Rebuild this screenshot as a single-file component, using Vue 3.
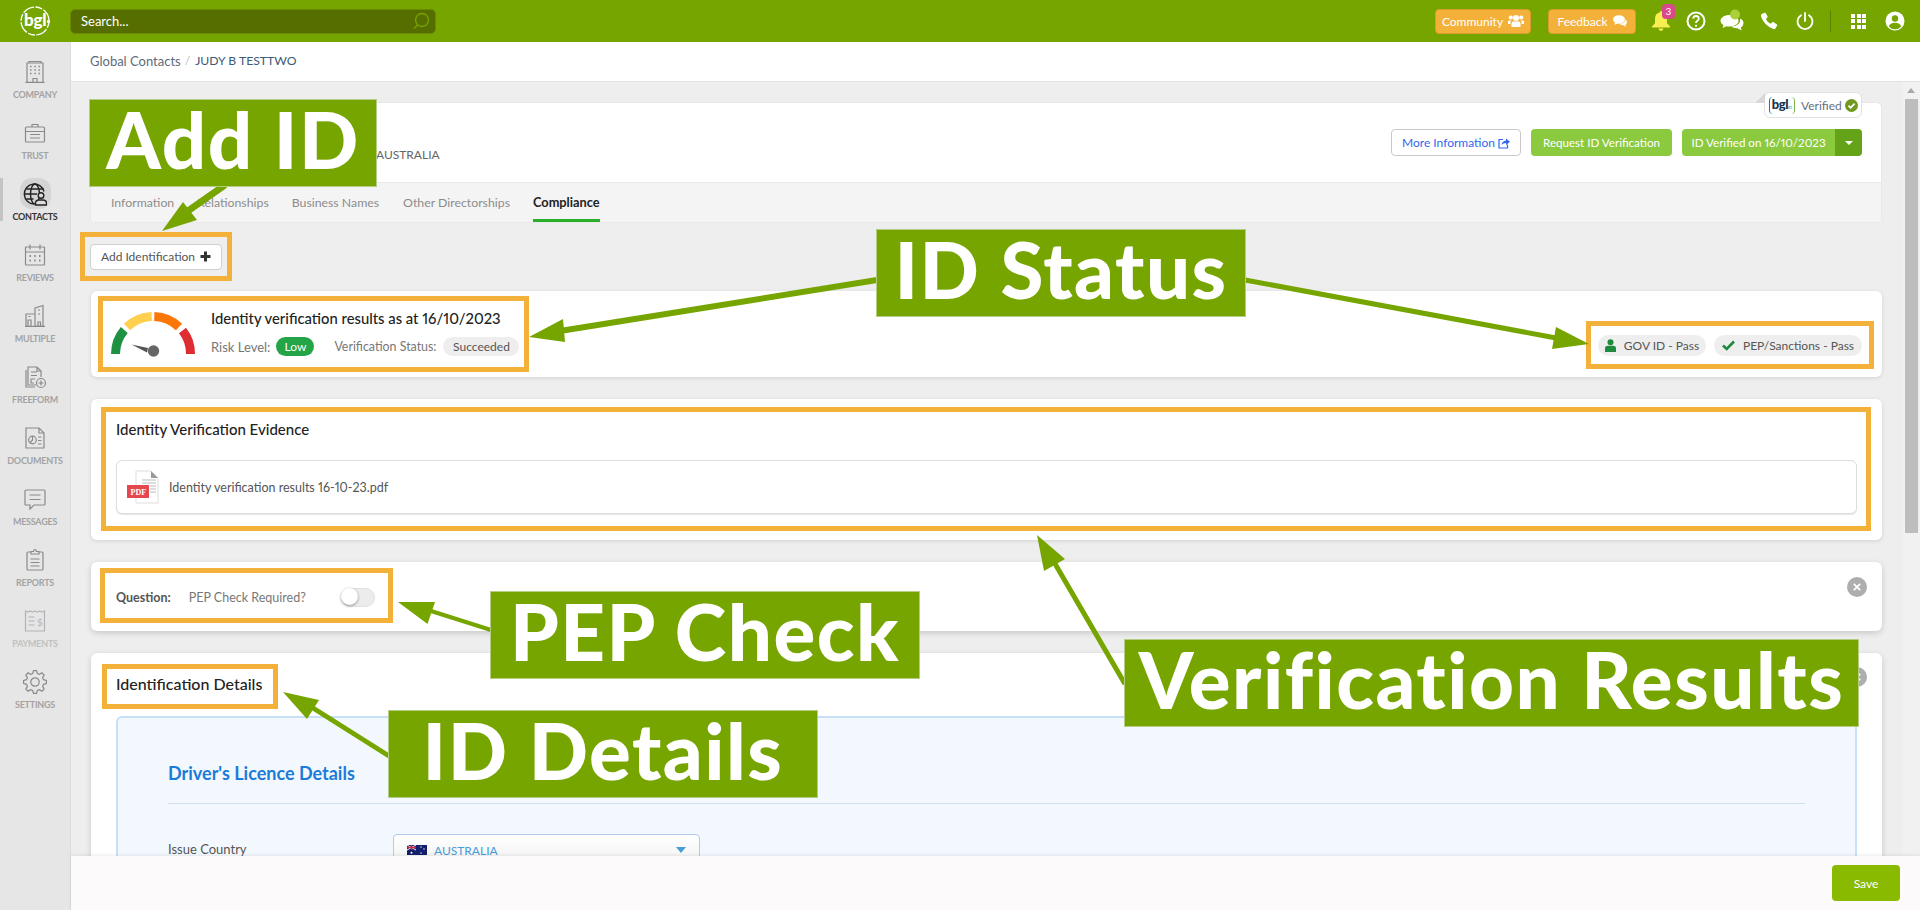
<script setup>
const gearPath = (() => {
  const teeth = 8, cx = 12, cy = 12, out = 11.5, inn = 8.8
  const pts = []
  for (let i = 0; i < teeth; i++) {
    const a = (i / teeth) * Math.PI * 2 - Math.PI / 2
    const s = (Math.PI * 2) / teeth
    for (const [o, r] of [[-0.34, inn], [-0.17, out], [0.17, out], [0.34, inn]]) {
      const t = a + o * s
      pts.push(`${(cx + r * Math.cos(t)).toFixed(2)} ${(cy + r * Math.sin(t)).toFixed(2)}`)
    }
  }
  return 'M' + pts.join('L') + 'Z'
})()
const nav = [
  { label: 'COMPANY', icon: 'company' },
  { label: 'TRUST', icon: 'trust' },
  { label: 'CONTACTS', icon: 'contacts', active: true },
  { label: 'REVIEWS', icon: 'reviews' },
  { label: 'MULTIPLE', icon: 'multiple' },
  { label: 'FREEFORM', icon: 'freeform' },
  { label: 'DOCUMENTS', icon: 'documents' },
  { label: 'MESSAGES', icon: 'messages' },
  { label: 'REPORTS', icon: 'reports' },
  { label: 'PAYMENTS', icon: 'payments', faint: true },
  { label: 'SETTINGS', icon: 'settings' }
]
const tabs = ['Information', 'Relationships', 'Business Names', 'Other Directorships', 'Compliance']
const outlines = ['o-add', 'o-status', 'o-chips', 'o-evidence', 'o-question', 'o-details']
const arrows = [
  { x1: 225, y1: 185, x2: 185, y2: 213, w: 7, head: '162,231 183,202 197,220' },
  { x1: 877, y1: 280, x2: 560, y2: 331, w: 6, head: '529,337 563,319 565,342' },
  { x1: 1245, y1: 280, x2: 1556, y2: 338, w: 5, head: '1589,344 1556,327 1552,349' },
  { x1: 1125, y1: 684, x2: 1054, y2: 562, w: 5, head: '1037,535 1065,559 1044,571' },
  { x1: 491, y1: 630, x2: 431, y2: 611, w: 4, head: '398,602 435,602 427.5,624' },
  { x1: 389, y1: 756, x2: 313, y2: 708, w: 5, head: '283,692 319,700 307,719' }
]
const labels = [
  { text: 'Add ID', cls: 'l-add' },
  { text: 'ID Status', cls: 'l-status' },
  { text: 'PEP Check', cls: 'l-pep' },
  { text: 'ID Details', cls: 'l-details' },
  { text: 'Verification Results', cls: 'l-results' }
]
</script>

<template>
  <div class="app">
    <header class="topbar">
      <div class="logo">
        <svg width="32" height="32" viewBox="0 0 32 32"><circle cx="16" cy="16" r="14" fill="none" stroke="#fff" stroke-width="1.3" stroke-dasharray="7 1.5 12 1.5"/><circle cx="29.500" cy="16.500" r="1.700" fill="#fff"/></svg>
        <span class="logo-text">bgl</span>
      </div>
      <div class="search">
        <span>Search...</span>
        <svg width="18" height="18" viewBox="0 0 18 18" fill="none" stroke="#76a500" stroke-width="1.3"><circle cx="10" cy="8" r="6.5"/><path d="M5.5 13 2 16.5"/></svg>
      </div>
      <div class="top-right">
        <button class="pill-btn community">Community
          <svg width="16" height="14" viewBox="0 0 16 14" fill="#fff"><circle cx="8" cy="4" r="3"/><circle cx="2.8" cy="3.5" r="2.1"/><circle cx="13.2" cy="3.5" r="2.1"/><path d="M3.5 13V9.5Q3.5 7.6 5.5 7.6h5q2 0 2 1.9V13zM0 10V7.8Q0 6.4 1.6 6.4h1.6Q2.4 7.4 2.4 9v1zM16 10V7.8q0-1.4-1.6-1.4h-1.6q.8 1 .8 2.6v1z"/></svg>
        </button>
        <button class="pill-btn feedback">Feedback
          <svg width="14" height="12" viewBox="0 0 14 12" fill="#fff"><ellipse cx="6" cy="4.5" rx="6" ry="4.2"/><path d="M2 7.5 1.6 10 5 8zM12.8 4.4q1.2 1 1.2 2.6 0 1.7-1.6 2.7l.4 2-2.6-1.5q-2.5 0-3.9-1.4 5.6-.3 6.5-4.4z"/></svg>
        </button>
        <div class="bell">
          <svg width="20" height="22" viewBox="0 0 20 22" fill="#f7ee52"><path d="M10 1q1.3 0 1.4 1.6Q16 3.6 16 9v4.2l3 3.3v1.1H1v-1.1l3-3.3V9q0-5.4 4.6-6.4Q8.700 1 10 1zM7.500 18.600h5Q12.200 21 10 21T7.500 18.600z"/></svg>
          <span class="badge">3</span>
        </div>
        <svg class="ti i-q" width="20" height="20" viewBox="0 0 20 20" fill="none" stroke="#fff" stroke-width="2"><circle cx="10" cy="10" r="8.500"/><path d="M7.200 7.600Q7.400 5 10 5t2.800 2.400q0 1.500-1.500 2.300-1.300.7-1.300 2.300" stroke-width="1.800"/><circle cx="10" cy="14.800" r="1.100" fill="#fff" stroke="none"/></svg>
        <svg class="ti i-chat" width="24" height="24" viewBox="0 0 24 24" fill="#fff"><path d="M9.500 6C4.300 6 .5 8.700.5 12q0 2.700 3 4.300L2.500 19l4-1.800q1.400.3 3 .3c5.200 0 9-2.500 9-5.700S14.700 6 9.500 6z"/><path d="M20.300 9.500q3.200 1.700 3.200 4.700 0 2.700-2.700 4.200l.9 3.100-4.200-2.200q-4 .2-6.500-1.800 9.700-.2 9.300-8z"/><circle cx="15" cy="5.500" r="5" fill="#a9cf3a"/></svg>
        <svg class="ti i-phone" width="18" height="18" viewBox="0 0 18 18" fill="#fff"><path d="M4.500 .8 1.400 2.300Q.6 2.800 1 4.500 3.800 13 13.200 17q1.600.4 2.200-.4l1.800-3.100q.300-.7-.3-1.100l-3.500-2.300q-.7-.4-1.200.2l-1.400 1.500Q7.300 10.500 5.900 7l1.500-1.600q.5-.6.100-1.200L5.600 1q-.4-.6-1.100-.2z"/></svg>
        <svg class="ti i-power" width="18" height="18" viewBox="0 0 18 18" fill="none" stroke="#fff" stroke-width="1.800" stroke-linecap="round"><path d="M5 3.200a7.500 7.500 0 1 0 8 0"/><path d="M9 1v8"/></svg>
        <span class="divider"></span>
        <div class="grid-icon"><i v-for="n in 9" :key="n"></i></div>
        <svg class="ti i-user" width="20" height="20" viewBox="0 0 20 20"><circle cx="10" cy="10" r="9.500" fill="#fff"/><circle cx="10" cy="7.500" r="3.200" fill="#76a500"/><path d="M3.800 15.500Q5 11.800 10 11.800t6.200 3.700Q14 18.200 10 18.200T3.800 15.500z" fill="#76a500"/></svg>
      </div>
    </header>

    <div class="body">
      <aside class="sidebar">
        <div v-for="item in nav" :key="item.label" class="nav-item" :class="{ active: item.active, faint: item.faint }">
          <div class="nav-icon">
            <svg width="24" height="24" viewBox="0 0 24 24" fill="none" stroke="currentColor" stroke-width="1.200">
              <template v-if="item.icon === 'company'">
                <path d="M4 22V3h16v19M2.500 22.300h19M6 3V1.500h12V3M10 22v-3.500h4V22"/>
                <path d="M7 6.500h1.500M11.300 6.500h1.500M15.500 6.500H17M7 10h1.500M11.300 10h1.500M15.500 10H17M7 13.500h1.500M11.300 13.500h1.500M15.500 13.500H17" stroke-width="1.600"/>
              </template>
              <template v-else-if="item.icon === 'trust'">
                <rect x="2.500" y="6" width="19" height="15" rx="1"/>
                <path d="M9 6V3.500h6V6M2.500 10.500h19M7 13.500h10M7 17h10"/>
              </template>
              <template v-else-if="item.icon === 'contacts'">
                <g stroke="#222" stroke-width="1.400">
                  <path d="M21 9.500A10 10 0 1 0 11 22"/>
                  <ellipse cx="12" cy="12" rx="4.500" ry="10"/>
                  <path d="M2 12h12M3.500 7h17M3.500 17h7"/>
                  <circle cx="18" cy="13.500" r="2.800" fill="#ddd"/>
                  <path d="M12.500 23v-1.500q0-3.500 3.500-3.500h4q3.500 0 3.500 3.500V23z" fill="#ddd"/>
                </g>
              </template>
              <template v-else-if="item.icon === 'reviews'">
                <rect x="2.500" y="4" width="19" height="18" rx=".5"/>
                <path d="M2.500 9h19M7 1.500v5M17 1.500v5"/>
                <path d="M6.500 13h1.500M11.200 13h1.500M16 13h1.500M6.500 17.500h1.500M11.200 17.500h1.500M16 17.500h1.500" stroke-width="1.800"/>
              </template>
              <template v-else-if="item.icon === 'multiple'">
                <path d="M12 22V4l8-2.500V22zM3 22V10h9v12M2 22.300h20"/>
                <path d="M5 22v-6h3v6M15 22v-4h2.500v4M5.500 12.500h2M15 6h2M15 10h2"/>
              </template>
              <template v-else-if="item.icon === 'freeform'">
                <path d="M13 20H5V2h9l4 4v6M14 2v4h4M8 7h6M8 10.500h6M8 14h4M8 14v4h3"/>
                <path d="M3 5v17h9"/>
                <circle cx="18" cy="18" r="4.500"/><path d="M18 15.500v5M15.500 18h5"/>
              </template>
              <template v-else-if="item.icon === 'documents'">
                <path d="M3 22V2h13l5 5v15zM16 2v5h5"/>
                <circle cx="9.500" cy="14" r="3.800"/><path d="M9.500 10.200V14l-2.500 3M15 11h3.500M15 14.500h3.500M15 18h3.500"/>
              </template>
              <template v-else-if="item.icon === 'messages'">
                <path d="M3 3h18q1 0 1 1v13q0 1-1 1H11l-4 4v-4H3q-1 0-1-1V4q0-1 1-1zM6.500 8h11M6.500 12.500h11"/>
              </template>
              <template v-else-if="item.icon === 'reports'">
                <path d="M8 4H5q-1 0-1 1v16q0 1 1 1h14q1 0 1-1V5q0-1-1-1h-3"/>
                <path d="M8 6V3.500h2.500Q11 1.500 12 1.500t1.500 2H16V6zM7.500 11h9M7.500 14.500h9M7.500 18h9"/>
              </template>
              <template v-else-if="item.icon === 'payments'">
                <path d="M2.500 2v20h19V2l-2.400 1.200L16.800 2l-2.400 1.200L12 2 9.600 3.200 7.200 2 4.900 3.200zM5.500 8h6M5.500 12h6M5.500 16h6"/>
                <text x="14" y="17" font-size="10" fill="currentColor" stroke="none" font-family="Lato, sans-serif">$</text>
              </template>
              <template v-else>
                <path :d="gearPath"/>
                <circle cx="12" cy="12" r="4.200"/>
              </template>
            </svg>
          </div>
          <span class="nav-label">{{ item.label }}</span>
        </div>
      </aside>

      <main class="main">
        <nav class="crumbs"><span>Global Contacts</span><em>/</em><strong>JUDY B TESTTWO</strong></nav>
        <div class="main-row">
          <div class="content">
            <section class="head-card">
              <div class="badge-verified">
                <span class="fold"></span>
                <span class="id-logo"><b>bgl</b><small>ID</small></span>
                <span class="verified-text">Verified</span>
                <svg width="13" height="13" viewBox="0 0 13 13"><circle cx="6.500" cy="6.500" r="6.500" fill="#6f9a1f"/><path d="M3.500 6.700 5.600 8.800 9.600 4.600" fill="none" stroke="#fff" stroke-width="1.800"/></svg>
              </div>
              <div class="head-top">
                <span class="country">AUSTRALIA</span>
                <div class="head-actions">
                  <button class="btn-more">More Information
                    <svg width="12" height="12" viewBox="0 0 12 12" fill="none" stroke="#3366ee" stroke-width="1.200"><path d="M5 2.500H1v8.500h8.500V7.500"/><path d="M3.500 8Q4 4 8 3.800V1.500L12 4.800 8 8V6Q5 6 3.500 8z" fill="#3366ee" stroke="none"/></svg>
                  </button>
                  <button class="btn-green">Request ID Verification</button>
                  <div class="split">
                    <button class="btn-green flat">ID Verified on 16/10/2023</button>
                    <span class="caret-box"><i></i></span>
                  </div>
                </div>
              </div>
              <div class="tabs">
                <span v-for="t in tabs" :key="t" class="tab" :class="{ current: t === 'Compliance' }">{{ t }}</span>
              </div>
            </section>

            <button class="btn-add">Add Identification
              <svg width="11" height="11" viewBox="0 0 11 11" fill="#333"><path d="M4 .5h3V4h3.500v3H7v3.500H4V7H.5V4H4z"/></svg>
            </button>

            <section class="card risk">
              <svg class="gauge" width="86" height="50" viewBox="0 0 86 50" fill="none">
                <g stroke-width="9">
                  <path d="M5.500 44A37.500 37.500 0 0 1 14.300 20" stroke="#1f9142"/>
                  <path d="M17 17A37.500 37.500 0 0 1 41.700 6.500" stroke="#ffcf4f"/>
                  <path d="M44.300 6.500A37.500 37.500 0 0 1 69 17" stroke="#fb7608"/>
                  <path d="M72.500 20.500A37.500 37.500 0 0 1 80.500 44" stroke="#de2c33"/>
                </g>
                <path d="M21.500 34.500 38 38 37 42.500z" fill="#555"/>
                <circle cx="43.500" cy="41" r="5.700" fill="#666"/>
              </svg>
              <div class="risk-text">
                <h3>Identity verification results as at 16/10/2023</h3>
                <div class="risk-row">
                  <span>Risk Level:</span><b class="pill low">Low</b>
                  <span class="vs">Verification Status:</span><b class="pill grey">Succeeded</b>
                </div>
              </div>
              <div class="chips">
                <span class="chip">
                  <svg width="11" height="13" viewBox="0 0 11 13" fill="#1d8a3e"><circle cx="5.500" cy="3.200" r="3"/><path d="M0 13V9.500Q0 6.800 3 6.800h5q3 0 3 2.700V13z"/></svg>
                  GOV ID - Pass
                </span>
                <span class="chip">
                  <svg width="13" height="11" viewBox="0 0 13 11" fill="none" stroke="#1d8a3e" stroke-width="2.600"><path d="M1 5.500 4.700 9 12 1.500"/></svg>
                  PEP/Sanctions - Pass
                </span>
              </div>
            </section>

            <section class="card evidence">
              <h3>Identity Verification Evidence</h3>
              <div class="file">
                <svg class="pdf" width="33" height="34" viewBox="0 0 33 34">
                  <path d="M9 1h15l7 7v25H9z" fill="#fff" stroke="#ddd"/><path d="M24 1v7h7z" fill="#999"/>
                  <path d="M15 10h14M15 13h14M23 16h6M23 19h6M23 22h6" stroke="#bbb" stroke-width="1"/>
                  <rect x="0" y="15" width="22" height="13" fill="#e5474f"/>
                  <text x="3.500" y="25" font-size="8" font-weight="700" fill="#fff" font-family="Liberation Serif, serif">PDF</text>
                </svg>
                <span>Identity verification results 16-10-23.pdf</span>
              </div>
            </section>

            <section class="card question">
              <b>Question:</b>
              <span class="q-text">PEP Check Required?</span>
              <span class="toggle"><i></i></span>
              <span class="close"><svg width="8" height="8" viewBox="0 0 8 8" stroke="#fff" stroke-width="1.800"><path d="M.8.8l6.400 6.400M7.200.8.8 7.200"/></svg></span>
            </section>

            <section class="card details">
              <h3>Identification Details</h3>
              <span class="close"><svg width="8" height="8" viewBox="0 0 8 8" stroke="#fff" stroke-width="1.800"><path d="M.8.8l6.400 6.400M7.200.8.8 7.200"/></svg></span>
              <div class="panel">
                <h4>Driver's Licence Details</h4>
                <div class="rule"></div>
                <div class="field">
                  <label>Issue Country</label>
                  <div class="select">
                    <svg width="20" height="10" viewBox="0 0 20 10"><rect width="20" height="10" fill="#14206e"/><path d="M0 0l9 5M9 0 0 5" stroke="#fff" stroke-width="1"/><path d="M4.500 0v5M0 2.500h9" stroke="#d8273a" stroke-width="1.400"/><circle cx="4.500" cy="7.800" r="1" fill="#fff"/><circle cx="14" cy="2" r=".7" fill="#fff"/><circle cx="17" cy="4" r=".7" fill="#fff"/><circle cx="14" cy="8" r=".7" fill="#fff"/></svg>
                    <span>AUSTRALIA</span>
                    <i class="sel-caret"></i>
                  </div>
                </div>
              </div>
            </section>
          </div>
          <div class="scrollbar"><i class="up"></i><span class="thumb"></span></div>
        </div>
        <footer class="foot"><button class="btn-save">Save</button></footer>
      </main>
    </div>

    <div class="overlay">
      <span v-for="o in outlines" :key="o" class="outline" :class="o"></span>
      <svg class="arrows" width="1920" height="910" viewBox="0 0 1920 910">
        <g v-for="(a, i) in arrows" :key="i">
          <line :x1="a.x1" :y1="a.y1" :x2="a.x2" :y2="a.y2" :stroke-width="a.w" stroke="#76a500"/>
          <polygon :points="a.head" fill="#76a500"/>
        </g>
      </svg>
      <div v-for="l in labels" :key="l.text" class="callout" :class="l.cls">{{ l.text }}</div>
    </div>
  </div>
</template>

<style>
html, body { margin: 0; overflow: hidden; }
</style>

<style scoped>
.app { position: relative; width: 1920px; height: 910px; overflow: hidden; font-family: Lato, "Liberation Sans", sans-serif; font-variant-numeric: proportional-nums; font-size: 13px; color: #555; background: #eee; }
button { font-family: inherit; font-variant-numeric: inherit; cursor: pointer; }
h3, h4 { margin: 0; }

.topbar { height: 42px; background: #76a500; display: flex; align-items: center; }
.logo { width: 70px; height: 42px; display: flex; align-items: center; justify-content: center; position: relative; }
.logo-text { position: absolute; left: 24px; top: 9px; color: #fff; font-size: 17px; font-weight: 900; letter-spacing: -.3px; }
.search { width: 366px; height: 25px; box-sizing: border-box; background: #566e00; border: 1px solid #6a8a05; border-radius: 5px; display: flex; align-items: center; justify-content: space-between; padding: 0 5px 0 10px; color: #fff; font-size: 13px; }
.top-right { margin-left: auto; display: flex; align-items: center; padding-right: 15px; }
.pill-btn { height: 25px; box-sizing: border-box; background: #f4b13a; border: 1px solid #d99c2e; border-radius: 4px; color: #fff; font-size: 12px; display: flex; align-items: center; justify-content: center; gap: 5px; padding: 0; white-space: nowrap; }
.pill-btn svg { flex: none; }
.community { width: 96px; margin-right: 17px; }
.feedback { width: 88px; margin-right: 15px; }
.bell { position: relative; width: 20px; height: 22px; margin-right: 15px; }
.badge { position: absolute; left: 11px; top: -6px; width: 13px; height: 15px; border-radius: 4px; background: #d8488b; color: #fff; font-size: 10px; line-height: 15px; text-align: center; }
.ti { display: block; }
.i-q { margin-right: 14px; }
.i-chat { margin-right: 16px; margin-top: -1px; }
.i-phone { margin-right: 18px; }
.i-power { margin-right: 16px; }
.divider { width: 1px; height: 22px; background: #5c8000; margin-right: 20px; }
.grid-icon { width: 15px; height: 15px; display: grid; grid-template-columns: repeat(3, 4px); grid-auto-rows: 4px; gap: 1.500px; margin-right: 19px; }
.grid-icon i { background: #fff; }

.body { display: flex; height: 868px; }
.sidebar { width: 70px; flex: none; background: #e6e6e6; border-right: 1px solid #dcdcdc; padding-top: 14px; display: flex; flex-direction: column; }
.nav-item { height: 61px; display: flex; flex-direction: column; align-items: center; color: #8a8a8a; position: relative; flex: none; }
.nav-icon { width: 31px; height: 31px; display: flex; align-items: center; justify-content: center; border-radius: 12px; }
.nav-label { font-size: 9px; font-weight: 700; letter-spacing: -.25px; color: #a3a3a3; margin-top: 2px; line-height: 12px; }
.active .nav-icon { background: #d4d4d4; }
.active .nav-label { color: #333; }
.active::before { content: ""; position: absolute; left: 0; top: 0; width: 3px; height: 43px; background: #c4c4c4; }
.faint { opacity: .55; }

.main { flex: 1; min-width: 0; display: flex; flex-direction: column; }
.crumbs { height: 40px; box-sizing: border-box; background: #fff; border-bottom: 1px solid #e2e2e2; display: flex; align-items: center; padding: 0 0 2px 19px; font-size: 13px; color: #5d6b78; flex: none; }
.crumbs em { font-style: normal; color: #bbb; margin: 0 5px 0 4px; font-size: 12px; }
.crumbs strong { font-weight: 400; font-size: 12.2px; color: #3c5a78; }
.main-row { flex: 1; min-height: 0; display: flex; overflow: hidden; }
.content { flex: 1; min-width: 0; padding: 20px 21px 0 19px; display: flex; flex-direction: column; align-items: stretch; }
.scrollbar { width: 17px; flex: none; background: #f1f1f1; position: relative; }
.up { position: absolute; left: 4px; top: 6px; border: 4px solid transparent; border-bottom: 5px solid #a8a8a8; border-top: 0; }
.thumb { position: absolute; left: 2px; right: 2px; top: 17px; height: 434px; background: #bdbdbd; }

.head-card { height: 121px; flex: none; box-sizing: border-box; background: #fff; border: 1px solid #e8e8e8; border-radius: 5px; position: relative; display: flex; flex-direction: column; }
.badge-verified { position: absolute; right: 19px; top: -11px; height: 26px; width: 98px; box-sizing: border-box; background: #fff; border: 1px solid #e2e2e2; border-radius: 6px; display: flex; align-items: center; padding-left: 4px; gap: 6px; }
.fold { position: absolute; left: -10px; top: 0; border-left: 10px solid transparent; border-bottom: 10px solid #d8d8d8; }
.id-logo { width: 26px; height: 17px; flex: none; box-sizing: border-box; border-left: 1.500px solid #1c7c9c; border-right: 1.500px solid #7ab648; border-radius: 4px; font-size: 13px; color: #12344d; line-height: 14px; text-align: center; white-space: nowrap; }
.id-logo b { font-weight: 900; letter-spacing: -.5px; }
.id-logo small { font-size: 4px; color: #1c7c9c; }
.verified-text { font-size: 12px; color: #66707a; width: 38px; }
.head-top { height: 79px; box-sizing: border-box; display: flex; align-items: flex-start; padding: 26px 19px 0 0; flex: none; }
.country { margin: 18px 0 0 285px; color: #666; font-size: 12px; }
.head-actions { margin-left: auto; display: flex; gap: 10px; }
.btn-more { width: 130px; height: 27px; box-sizing: border-box; background: #fff; border: 1px solid #c9c9c9; border-radius: 4px; color: #3366ee; font-size: 12px; display: flex; align-items: center; justify-content: center; gap: 3px; padding: 0; }
.btn-green { height: 27px; width: 141px; background: #8bc93f; border: 0; border-radius: 4px; color: #fff; font-size: 11.600px; padding: 0; }
.split { display: flex; }
.btn-green.flat { width: 153px; border-radius: 4px 0 0 4px; }
.caret-box { width: 27px; height: 27px; background: #64a317; border-radius: 0 4px 4px 0; display: flex; align-items: center; justify-content: center; }
.caret-box i { border: 4px solid transparent; border-top: 4px solid #fff; border-bottom: 0; }
.tabs { flex: 1; background: #f4f4f4; border-top: 1px solid #e8e8e8; border-radius: 0 0 5px 5px; display: flex; padding-left: 20px; gap: 23px; }
.tab { height: 100%; display: flex; align-items: center; color: #8c8c8c; font-size: 12.300px; box-sizing: border-box; padding-bottom: 1px; }
.tab:nth-child(4) { margin-left: 1px; }
.tab.current { color: #222; font-weight: 700; font-size: 12.800px; border-bottom: 3px solid #2aaf2a; padding: 2px 0 0; }

.btn-add { align-self: flex-start; margin-top: 21px; height: 26px; width: 132px; box-sizing: border-box; background: #fff; border: 1px solid #cfcfcf; border-radius: 4px; color: #555; font-size: 12px; display: flex; align-items: center; justify-content: center; gap: 5px; padding: 0 0 2px; flex: none; }

.card { background: #fff; border-radius: 6px; box-shadow: 0 1px 4px rgba(0,0,0,.12); flex: none; position: relative; margin-left: 1px; }
.risk { margin-top: 21px; height: 86px; display: flex; align-items: flex-start; box-sizing: border-box; padding: 16px 20px 0 18px; }
.gauge { margin: 3px 0 0 1px; flex: none; }
.risk-text { margin-left: 15px; }
.risk-text h3 { font-size: 14.800px; font-weight: 500; color: #222; line-height: 22px; }
.risk-row { display: flex; align-items: center; margin-top: 8px; font-size: 13px; color: #777; }
.pill { height: 19px; border-radius: 10px; font-weight: 400; font-size: 12px; line-height: 19px; text-align: center; display: block; }
.low { width: 38px; background: #22a447; color: #fff; margin-left: 6px; }
.vs { margin-left: 20px; font-size: 12.400px; }
.grey { width: 76px; background: #eee; color: #555; margin-left: 7px; }
.chips { margin-left: auto; display: flex; gap: 8px; margin-top: 28px; }
.chip { height: 21px; background: #eee; border-radius: 11px; display: flex; align-items: center; justify-content: center; gap: 8px; font-size: 12px; color: #555; }
.chip:first-child { width: 108px; }
.chip:last-child { width: 148px; }

.evidence { margin-top: 22px; height: 141px; box-sizing: border-box; padding: 19px 25px 0 25px; }
.evidence h3 { font-size: 15px; font-weight: 500; color: #222; line-height: 22px; }
.file { margin-top: 20px; height: 54px; box-sizing: border-box; background: #fff; border: 1px solid #ddd; border-radius: 6px; box-shadow: 0 1px 1px rgba(0,0,0,.1); display: flex; align-items: center; padding-left: 10px; font-size: 12.500px; color: #555; }
.pdf { margin-right: 9px; }

.question { margin-top: 22px; height: 69px; display: flex; align-items: center; padding: 1px 0 0 25px; box-sizing: border-box; font-size: 12.500px; box-shadow: 0 2px 6px rgba(0,0,0,.16); }
.question b { color: #555; font-weight: 700; }
.q-text { margin-left: 18px; color: #777; }
.toggle { margin-left: 35px; width: 34px; height: 19px; background: #ececec; border-radius: 10px; border: 1px solid #e0e0e0; box-sizing: border-box; position: relative; }
.toggle i { position: absolute; left: -1px; top: -1px; width: 17px; height: 17px; background: #fff; border-radius: 50%; box-shadow: 0 1px 3px rgba(0,0,0,.4); }
.close { position: absolute; right: 15px; top: 15px; width: 20px; height: 20px; border-radius: 50%; background: #aeaeae; display: flex; align-items: center; justify-content: center; }

.details { margin-top: 22px; height: 400px; box-sizing: border-box; padding: 20px 25px 0; box-shadow: 0 2px 6px rgba(0,0,0,.16); }
.details .close { top: 14px; }
.details h3 { font-size: 16px; font-weight: 500; color: #222; line-height: 22px; }
.panel { margin-top: 21px; height: 300px; box-sizing: border-box; background: #f3f8fe; border: 2px solid #c7e0f8; border-radius: 6px; padding: 0 50px; }
.panel h4 { margin-top: 45px; font-size: 18px; font-weight: 700; color: #1a7bd9; line-height: 20px; }
.rule { height: 1px; background: #cfe2ee; margin-top: 20px; }
.field { display: flex; align-items: flex-start; margin-top: 30px; }
.field label { width: 225px; color: #555; font-size: 13px; line-height: 30px; }
.select { width: 307px; height: 32px; box-sizing: border-box; background: linear-gradient(#fff, #f1f1f1); border: 1px solid #b2c9f0; border-radius: 4px; display: flex; align-items: center; padding: 0 13px; gap: 7px; color: #4a9bd8; font-size: 12px; }
.sel-caret { margin-left: auto; border: 5px solid transparent; border-top: 6px solid #4a9bd8; border-bottom: 0; }

.foot { height: 54px; flex: none; background: #fcfafb; display: flex; align-items: center; justify-content: flex-end; padding-right: 20px; box-sizing: border-box; box-shadow: 0 -1px 3px rgba(0,0,0,.08); position: relative; }
.btn-save { width: 68px; height: 36px; background: #8aba00; border: 0; border-radius: 4px; color: #fff; font-size: 12px; }

.overlay { position: absolute; inset: 0; pointer-events: none; }
.outline { position: absolute; box-sizing: border-box; border: 5px solid #f4b13a; }
.o-add { left: 80px; top: 232px; width: 152px; height: 49px; }
.o-status { left: 98px; top: 296px; width: 431px; height: 76px; }
.o-chips { left: 1586px; top: 321px; width: 288px; height: 48px; }
.o-evidence { left: 101px; top: 407px; width: 1770px; height: 124px; }
.o-question { left: 100px; top: 568px; width: 293px; height: 55px; }
.o-details { left: 102px; top: 664px; width: 176px; height: 45px; }
.arrows { position: absolute; left: 0; top: 0; }
.callout { position: absolute; box-sizing: border-box; height: 88px; background: #76a500; border: 1px solid #b5cc84; color: #fff; font-family: Lato, sans-serif; font-weight: 900; font-size: 78px; line-height: 78px; text-align: center; white-space: nowrap; letter-spacing: 1.500px; }
.l-add { left: 89px; top: 99px; width: 288px; }
.l-status { left: 876px; top: 229px; width: 370px; }
.l-pep { left: 490px; top: 591px; width: 430px; }
.l-details { left: 388px; top: 710px; width: 430px; }
.l-results { left: 1124px; top: 639px; width: 735px; }
</style>
